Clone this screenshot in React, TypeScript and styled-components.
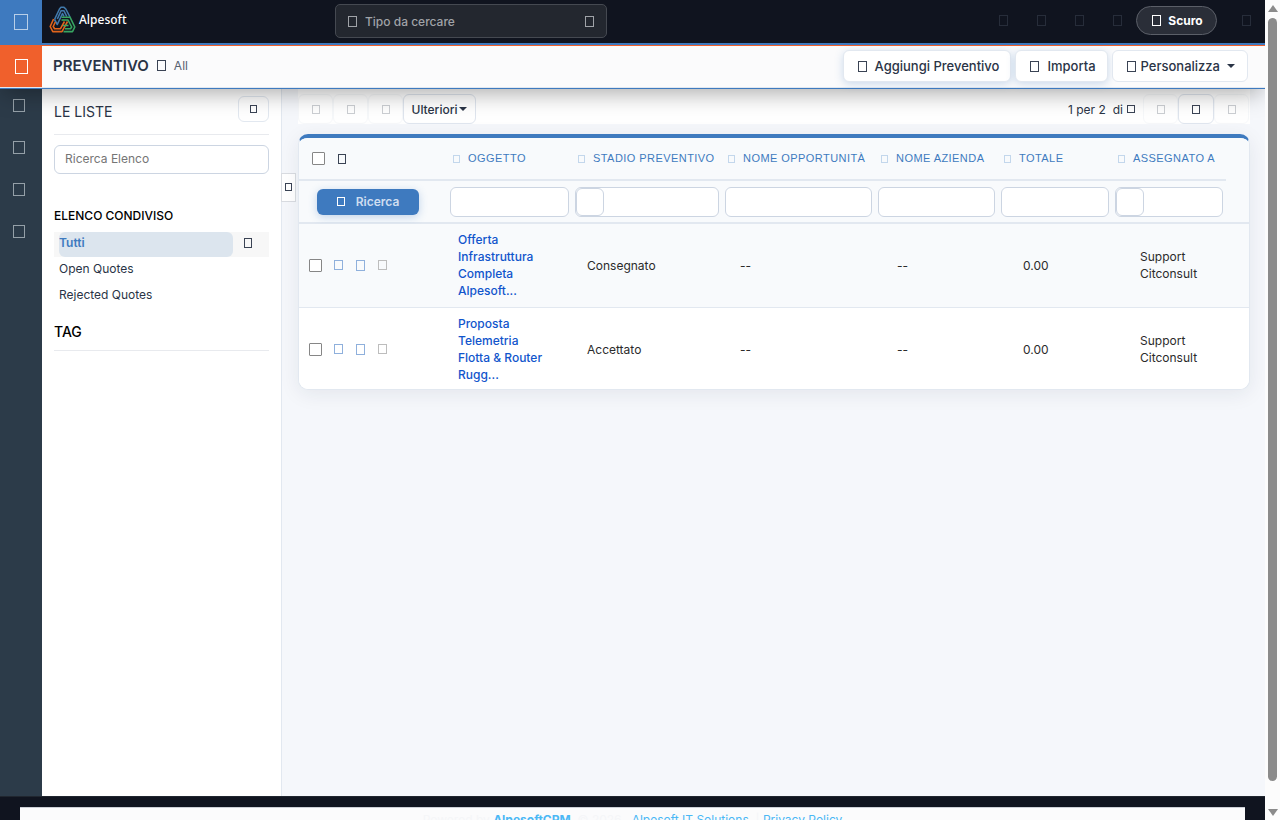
import React from "react";
import styled, { createGlobalStyle } from "styled-components";

const GlobalStyle = createGlobalStyle`
  *, *::before, *::after { box-sizing: border-box; }
  body { margin: 0; background: #f5f7fb; font-family: Inter, "Liberation Sans", sans-serif; font-size: 12px; line-height: 17px; color: #2a3446; }
  button, input, select { font: inherit; color: inherit; margin: 0; }
  a { text-decoration: none; color: inherit; }
  h1, h2, h3, ul { margin: 0; padding: 0; font-weight: 500; }
  ul { list-style: none; }
`;

const Shell = styled.div`
  display: flex;
  height: 100vh;
  overflow: hidden;
`;

const Page = styled.div`
  flex: 1;
  min-width: 0;
  height: 100vh;
  overflow: hidden;
`;

const Glyph = styled.span<{ $w?: number; $h?: number; $c?: string }>`
  flex: none;
  display: inline-block;
  width: ${(p) => p.$w ?? 9}px;
  height: ${(p) => p.$h ?? 11}px;
  border: 1px solid ${(p) => p.$c ?? "#3a4354"};
`;

/* ---------- header ---------- */

const Header = styled.header`
  position: relative;
  z-index: 2;
  border-bottom: 1px solid #3e7abf;
  box-shadow: 0 8px 22px -4px rgba(0, 0, 0, 0.34);
`;

const TopBar = styled.div`
  display: flex;
  align-items: stretch;
  height: 45px;
  background: #10141f;
  border-bottom: 2px solid #3e7abf;
`;

const AppTile = styled.button<{ $bg: string }>`
  flex: none;
  display: flex;
  align-items: center;
  justify-content: center;
  width: 42px;
  padding: 0;
  border: 0;
  background: ${(p) => p.$bg};
`;

const Brand = styled.a`
  flex: none;
  display: flex;
  align-items: center;
  gap: 3px;
  width: 293px;
  padding: 0 0 4px 7px;
  color: #fff;
  font: 500 12px/18px "Noto Sans", "Open Sans", sans-serif;
`;

const GlobalSearch = styled.label`
  flex: none;
  display: flex;
  align-items: center;
  gap: 8px;
  width: 272px;
  height: 34px;
  margin-top: 4px;
  padding: 0 12px;
  border: 1px solid #454951;
  border-radius: 5px;
  background: #23272f;
  input {
    flex: 1;
    min-width: 0;
    padding: 0;
    border: 0;
    outline: 0;
    background: none;
    font-size: 12px;
    font-weight: 500;
  }
  input::placeholder { color: #a0a3a8; }
`;

const TopActions = styled.div`
  flex: 1;
  display: flex;
  align-items: center;
  justify-content: flex-end;
  padding-bottom: 2px;
`;

const IconButton = styled.button`
  display: flex;
  align-items: center;
  justify-content: center;
  width: 38px;
  height: 30px;
  padding: 0;
  border: 0;
  background: none;
`;

const ThemeButton = styled.button`
  display: flex;
  align-items: center;
  justify-content: center;
  gap: 7px;
  width: 81px;
  height: 29px;
  margin-right: 10px;
  padding: 0 4px 0 6px;
  border: 1px solid #5b5f68;
  border-radius: 15px;
  background: #2a2e38;
  color: #fff;
  font-weight: 700;
`;

const ModuleBar = styled.div`
  display: flex;
  height: 43px;
  background: #fbfbfc;
  border-top: 1px solid #f0602c;
  border-bottom: 1px solid #e2e8f0;
`;

const Crumbs = styled.div`
  flex: 1;
  display: flex;
  align-items: center;
  gap: 8px;
  padding: 0 0 2px 11px;
  h1 { font-size: 15px; line-height: 20px; font-weight: 600; }
  a { color: #566070; }
`;

const ModuleActions = styled.div`
  display: flex;
  align-items: center;
  gap: 4px;
  padding: 0 17px 2px 0;
`;

const ActionButton = styled.button<{ $raised?: boolean }>`
  display: flex;
  align-items: center;
  gap: ${(p) => (p.$raised ? 8 : 5)}px;
  height: 32px;
  padding: 1px ${(p) => (p.$raised ? 11 : 12)}px 0 14px;
  border: 1px solid #e2e8f0;
  border-radius: 6px;
  background: #fff;
  font-size: 13px;
  font-weight: 500;
  box-shadow: ${(p) => (p.$raised ? "0 2px 8px rgba(62, 122, 191, 0.25)" : "none")};
`;

const Caret = styled.span<{ $space?: number }>`
  width: 0;
  height: 0;
  margin-left: ${(p) => p.$space ?? 0}px;
  border: 4px solid transparent;
  border-top-color: currentColor;
  border-bottom: 0;
`;

/* ---------- body ---------- */

const Body = styled.div`
  display: flex;
  min-height: calc(100vh - 113px);
`;

const Rail = styled.nav`
  flex: none;
  width: 42px;
  background: #2c3b49;
  a {
    display: block;
    height: 42px;
    padding: 10px 0 0 13px;
  }
`;

const Sidebar = styled.aside`
  flex: none;
  width: 240px;
  padding: 7px 12px 0;
  background: #fff;
  border-right: 1px solid #e2e8f0;
`;

const ListsHead = styled.div`
  display: flex;
  align-items: flex-start;
  justify-content: space-between;
  height: 39px;
  border-bottom: 1px solid #e8eaee;
  h2 { font-size: 14px; line-height: 32px; font-weight: 400; }
`;

const AddList = styled.button`
  display: flex;
  align-items: center;
  justify-content: center;
  width: 31px;
  height: 26px;
  padding: 0;
  border: 1px solid #e2e8f0;
  border-radius: 6px;
  background: transparent;
`;

const ListSearch = styled.input`
  display: block;
  width: 100%;
  height: 29px;
  margin: 10px 0 33px;
  padding: 0 10px 2px;
  border: 1px solid #ccd5e2;
  border-radius: 6px;
  background: #fff;
  &::placeholder { color: #757575; }
`;

const GroupTitle = styled.h3`
  margin-bottom: 8px;
  font-size: 12px;
  line-height: 17px;
  color: #000;
`;

const ListItem = styled.li<{ $active?: boolean }>`
  display: flex;
  align-items: center;
  height: 25px;
  margin-bottom: 1px;
  padding-left: 5px;
  background: ${(p) => (p.$active ? "#f7f7f7" : "none")};
  a {
    width: 174px;
    height: 25px;
    margin-right: 11px;
    line-height: 22px;
    border-radius: 6px;
    background: ${(p) => (p.$active ? "#dce5ee" : "none")};
    color: ${(p) => (p.$active ? "#3e7abf" : "inherit")};
    font-weight: ${(p) => (p.$active ? 600 : 400)};
  }
`;

const MenuButton = styled.button`
  display: flex;
  padding: 0 0 4px;
  border: 0;
  background: none;
`;

const TagTitle = styled.h3`
  height: 41px;
  padding-top: 13px;
  border-bottom: 1px solid #e8eaee;
  font-size: 14px;
  line-height: 18px;
  color: #000;
`;

const CollapseTab = styled.button`
  flex: none;
  display: flex;
  align-items: center;
  justify-content: center;
  width: 15px;
  height: 29px;
  margin: 84px 2px 0 -1px;
  padding: 0 0 2px;
  border: 1px solid #d9dce1;
  background: #fff;
`;

const Main = styled.main`
  flex: 1;
  min-width: 0;
  padding-right: 15px;
`;

const Toolbar = styled.div`
  display: flex;
  align-items: flex-end;
  height: 35px;
  margin-bottom: 10px;
  padding-right: 1px;
  background: #fff;
`;

const ToolButton = styled.button<{ $off?: boolean; $w?: number }>`
  display: flex;
  align-items: center;
  justify-content: center;
  gap: 2px;
  width: ${(p) => p.$w ?? 35}px;
  height: 30px;
  padding: 0;
  border: 1px solid #dfe5ee;
  border-radius: 6px;
  background: transparent;
  font-weight: 500;
  color: #2a3446;
  opacity: ${(p) => (p.$off ? 0.25 : 1)};
`;

const Paging = styled.div`
  flex: 1;
  display: flex;
  align-items: center;
  justify-content: flex-end;
  gap: 7px;
  height: 30px;
  margin-right: 8px;
`;

const Card = styled.section`
  overflow: hidden;
  border: 1px solid #e2e8f0;
  border-top: 4px solid #3e7abf;
  border-radius: 10px;
  background: #fff;
  box-shadow: 0 4px 20px rgba(30, 40, 60, 0.08);
`;

const HeadWrap = styled.div`
  padding-right: 23px;
  background: #f8fafc;
  border-bottom: 2px solid #e2e8f0;
`;

const Table = styled.table`
  width: 100%;
  table-layout: fixed;
  border-collapse: separate;
  border-spacing: 0;
  th, td { padding: 0; text-align: left; }
`;

const HeadCell = styled.th`
  height: 43px;
  border-bottom: 2px solid #e2e8f0;
  font-weight: 400;
`;

const SortLink = styled.a`
  display: flex;
  align-items: center;
  gap: 8px;
  padding-left: 6px;
  white-space: nowrap;
  font-family: "Liberation Sans", sans-serif;
  font-size: 11px;
  letter-spacing: 0.04em;
  color: #3e7abf;
`;

const Row = styled.div<{ $gap?: number; $pad?: number }>`
  display: flex;
  align-items: center;
  gap: ${(p) => p.$gap ?? 8}px;
  padding-left: ${(p) => p.$pad ?? 0}px;
`;

const Check = styled.input`
  appearance: none;
  flex: none;
  width: 13px;
  height: 13px;
  border: 1px solid #868686;
  border-radius: 1px;
  background: #fff;
  &:checked { background: #3e7abf; }
`;

const FilterCell = styled.td`
  height: 41px;
`;

const FilterBox = styled.div`
  display: flex;
  height: 30px;
  margin: 0 3px;
  border: 1px solid #ccd5e2;
  border-radius: 6px;
  background: #fff;
`;

const FilterInput = styled.input`
  width: 100%;
  min-width: 0;
  padding: 0 8px;
  border: 0;
  outline: 0;
  background: none;
`;

const PickInput = styled.input`
  width: 28px;
  height: 28px;
  padding: 0 4px;
  border: 1px solid #ccd5e2;
  border-radius: 6px;
  background: #fff;
`;

const SearchButton = styled.button`
  display: flex;
  align-items: center;
  justify-content: center;
  gap: 11px;
  width: 102px;
  height: 26px;
  margin-left: 18px;
  padding: 0;
  border: 0;
  border-radius: 6px;
  background: #3e7abf;
  box-shadow: 0 2px 8px rgba(62, 122, 191, 0.3);
  color: #cfdef0;
  font-weight: 600;
`;

const DataRow = styled.tr<{ $shade?: boolean }>`
  background: ${(p) => (p.$shade ? "#f8fafc" : "#fff")};
  color: #2b2b2b;
  td {
    padding: 7px 8px 8px;
    border-bottom: 1px solid #e2e8f0;
  }
  &:last-child td {
    padding-bottom: 6px;
    border-bottom: 0;
  }
`;

const RecordLink = styled.a`
  display: block;
  width: 90px;
  color: #1155cc;
  font-weight: 500;
`;

/* ---------- footer and scroll bar ---------- */

const Footer = styled.footer`
  padding: 10px 20px;
  background: #10141f;
  border-top: 1px solid #20262f;
`;

const FooterText = styled.p`
  display: flex;
  justify-content: center;
  height: 38px;
  margin: 0;
  padding-top: 3px;
  border-top: 1px solid #cccfd6;
  background: #fbfbfc;
  color: #f5f6f8;
  white-space: pre;
  a { color: #4bb8f5; }
`;

const ScrollTrack = styled.div`
  flex: none;
  display: flex;
  flex-direction: column;
  align-items: center;
  width: 15px;
  padding: 5px 0 4px;
  background: #fcfcfc;
`;

const ScrollArrow = styled.span<{ $down?: boolean }>`
  width: 0;
  height: 0;
  border: 5px solid transparent;
  border-${(p) => (p.$down ? "top" : "bottom")}: 7px solid #8b8b8b;
  border-${(p) => (p.$down ? "bottom" : "top")}: 0;
`;

const ScrollThumb = styled.span`
  flex: 1;
  width: 9px;
  margin: 6px 0 28px;
  border-radius: 5px;
  background: #8b8b8b;
`;

const columns = [
  { name: "OGGETTO" },
  { name: "STADIO PREVENTIVO", pick: true },
  { name: "NOME OPPORTUNITÀ" },
  { name: "NOME AZIENDA" },
  { name: "TOTALE" },
  { name: "ASSEGNATO A", pick: true },
];

const headWidths = [148, 125, 150, 153, 123, 114, 114];
const bodyWidths = [151, 129, 153, 157, 126, 117, 117];

const quotes = [
  { subject: "Offerta Infrastruttura Completa Alpesoft...", stage: "Consegnato" },
  { subject: "Proposta Telemetria Flotta & Router Rugg...", stage: "Accettato" },
];

const Cols = ({ widths }: { widths: number[] }) => (
  <colgroup>
    {widths.map((w, i) => (
      <col key={i} width={w} />
    ))}
  </colgroup>
);

const Logo = () => (
  <svg width="27" height="27" viewBox="0 0 27 27" fill="none" strokeWidth="1.6" strokeLinejoin="round" aria-hidden="true">
    <g stroke="#4079ab">
      <path d="M5.500 13.500L10.500 3L12 1.300H15L16.800 3L21 11" />
      <path d="M5.500 13.500L8.300 18.500L13.500 7.500L15 10.500" />
      <path d="M8.300 13L12 4.800H15L17.800 10.500" />
    </g>
    <g stroke="#e0641c">
      <path d="M4.600 13L1.200 20.500L3.800 25.600H13L18.500 15.500" />
      <path d="M6.300 16L4.200 20.500L5.600 22.700H11.500L15.500 15.500" />
    </g>
    <g stroke="#38a561">
      <path d="M12.500 11.200H21L25.800 21L23.500 25.600H14.500" />
      <path d="M12.500 14H19L22.700 21L21.500 22.700H16" />
      <path d="M14 19.500H19.500" />
    </g>
  </svg>
);

export default function App() {
  return (
    <>
      <GlobalStyle />
      <Shell>
        <Page>
          <Header>
            <TopBar>
              <AppTile $bg="#3e7abf" aria-label="Menu">
                <Glyph $w={14} $h={16} $c="#b8cfe8" />
              </AppTile>
              <Brand href="#">
                <Logo />
                Alpesoft
              </Brand>
              <GlobalSearch>
                <Glyph $c="#a0a3a8" />
                <input type="text" placeholder="Tipo da cercare" aria-label="Tipo da cercare" />
                <Glyph $c="#a0a3a8" />
              </GlobalSearch>
              <TopActions>
                {["Crea", "Calendario", "Report", "Attività"].map((n) => (
                  <IconButton key={n} aria-label={n}>
                    <Glyph $c="#272d3a" />
                  </IconButton>
                ))}
                <ThemeButton>
                  <Glyph $c="#fff" />
                  Scuro
                </ThemeButton>
                <IconButton aria-label="Profilo">
                  <Glyph $c="#272d3a" />
                </IconButton>
              </TopActions>
            </TopBar>
            <ModuleBar>
              <AppTile $bg="#f0602c" aria-label="Preventivo">
                <Glyph $w={13} $h={15} $c="#fff" />
              </AppTile>
              <Crumbs>
                <h1>PREVENTIVO</h1>
                <Glyph />
                <a href="#">All</a>
              </Crumbs>
              <ModuleActions>
                <ActionButton $raised>
                  <Glyph />
                  Aggiungi Preventivo
                </ActionButton>
                <ActionButton $raised>
                  <Glyph />
                  Importa
                </ActionButton>
                <ActionButton>
                  <Glyph />
                  Personalizza
                  <Caret $space={2} />
                </ActionButton>
              </ModuleActions>
            </ModuleBar>
          </Header>

          <Body>
            <Rail>
              {["Marketing", "Vendite", "Supporto", "Strumenti"].map((n) => (
                <a key={n} href="#" aria-label={n}>
                  <Glyph $w={12} $h={13} $c="#95a0a8" />
                </a>
              ))}
            </Rail>
            <Sidebar>
              <ListsHead>
                <h2>LE LISTE</h2>
                <AddList aria-label="Nuova lista">
                  <Glyph $w={7} $h={8} />
                </AddList>
              </ListsHead>
              <ListSearch type="text" placeholder="Ricerca Elenco" aria-label="Ricerca Elenco" />
              <GroupTitle>ELENCO CONDIVISO</GroupTitle>
              <ul>
                <ListItem $active>
                  <a href="#">Tutti</a>
                  <MenuButton aria-label="Azioni">
                    <Glyph $w={8} $h={10} />
                  </MenuButton>
                </ListItem>
                <ListItem>
                  <a href="#">Open Quotes</a>
                </ListItem>
                <ListItem>
                  <a href="#">Rejected Quotes</a>
                </ListItem>
              </ul>
              <TagTitle>TAG</TagTitle>
            </Sidebar>
            <CollapseTab aria-label="Comprimi">
              <Glyph $w={7} $h={8} />
            </CollapseTab>
            <Main>
              <Toolbar>
                {["Modifica", "Elimina", "Commenta"].map((n) => (
                  <ToolButton key={n} $off disabled aria-label={n}>
                    <Glyph $w={8} $h={9} />
                  </ToolButton>
                ))}
                <ToolButton $w={73}>
                  Ulteriori
                  <Caret />
                </ToolButton>
                <Paging>
                  <span>1 per 2</span>
                  <Row $gap={4}>
                    di
                    <Glyph $w={8} $h={8} />
                  </Row>
                </Paging>
                <ToolButton $off disabled aria-label="Precedente">
                  <Glyph $w={8} $h={9} />
                </ToolButton>
                <ToolButton $w={36} aria-label="Vai alla pagina">
                  <Glyph $w={8} $h={9} />
                </ToolButton>
                <ToolButton $off disabled aria-label="Successivo">
                  <Glyph $w={8} $h={9} />
                </ToolButton>
              </Toolbar>
              <Card>
                <HeadWrap>
                  <Table aria-label="Filtri">
                    <Cols widths={headWidths} />
                    <thead>
                      <tr>
                        <HeadCell>
                          <Row $gap={13} $pad={13}>
                            <Check type="checkbox" aria-label="Seleziona tutto" />
                            <Glyph $w={8} $h={10} />
                          </Row>
                        </HeadCell>
                        {columns.map((c) => (
                          <HeadCell key={c.name} scope="col">
                            <SortLink href="#">
                              <Glyph $w={7} $h={8} $c="#c3d7ec" />
                              {c.name}
                            </SortLink>
                          </HeadCell>
                        ))}
                      </tr>
                    </thead>
                    <tbody>
                      <tr>
                        <FilterCell>
                          <SearchButton>
                            <Glyph $w={8} $h={9} $c="#fff" />
                            Ricerca
                          </SearchButton>
                        </FilterCell>
                        {columns.map((c) => (
                          <FilterCell key={c.name}>
                            <FilterBox>
                              {c.pick ? (
                                <PickInput type="text" aria-label={c.name} />
                              ) : (
                                <FilterInput type="text" aria-label={c.name} />
                              )}
                            </FilterBox>
                          </FilterCell>
                        ))}
                      </tr>
                    </tbody>
                  </Table>
                </HeadWrap>
                <Table aria-label="Preventivi">
                  <Cols widths={bodyWidths} />
                  <tbody>
                    {quotes.map((q, i) => (
                      <DataRow key={q.subject} $shade={i === 0}>
                        <td>
                          <Row $gap={12} $pad={2}>
                            <Check type="checkbox" aria-label={q.subject} />
                            <Row $gap={13}>
                              <Glyph $h={10} $c="#8fb0dc" />
                              <Glyph $h={11} $c="#8fb0dc" />
                              <Glyph $h={10} $c="#bdbdbd" />
                            </Row>
                          </Row>
                        </td>
                        <td>
                          <RecordLink href="#">{q.subject}</RecordLink>
                        </td>
                        <td>{q.stage}</td>
                        <td>--</td>
                        <td>--</td>
                        <td>0.00</td>
                        <td>
                          Support
                          <br />
                          Citconsult
                        </td>
                      </DataRow>
                    ))}
                  </tbody>
                </Table>
              </Card>
            </Main>
          </Body>

          <Footer>
            <FooterText>
              {"Powered by "}
              <a href="#">
                <b>AlpesoftCRM</b>
              </a>
              {"  © 2026   "}
              <a href="#">Alpesoft IT Solutions</a>
              {"  | "}
              <a href="#">Privacy Policy</a>
            </FooterText>
          </Footer>
        </Page>
        <ScrollTrack aria-hidden="true">
          <ScrollArrow />
          <ScrollThumb />
          <ScrollArrow $down />
        </ScrollTrack>
      </Shell>
    </>
  );
}
